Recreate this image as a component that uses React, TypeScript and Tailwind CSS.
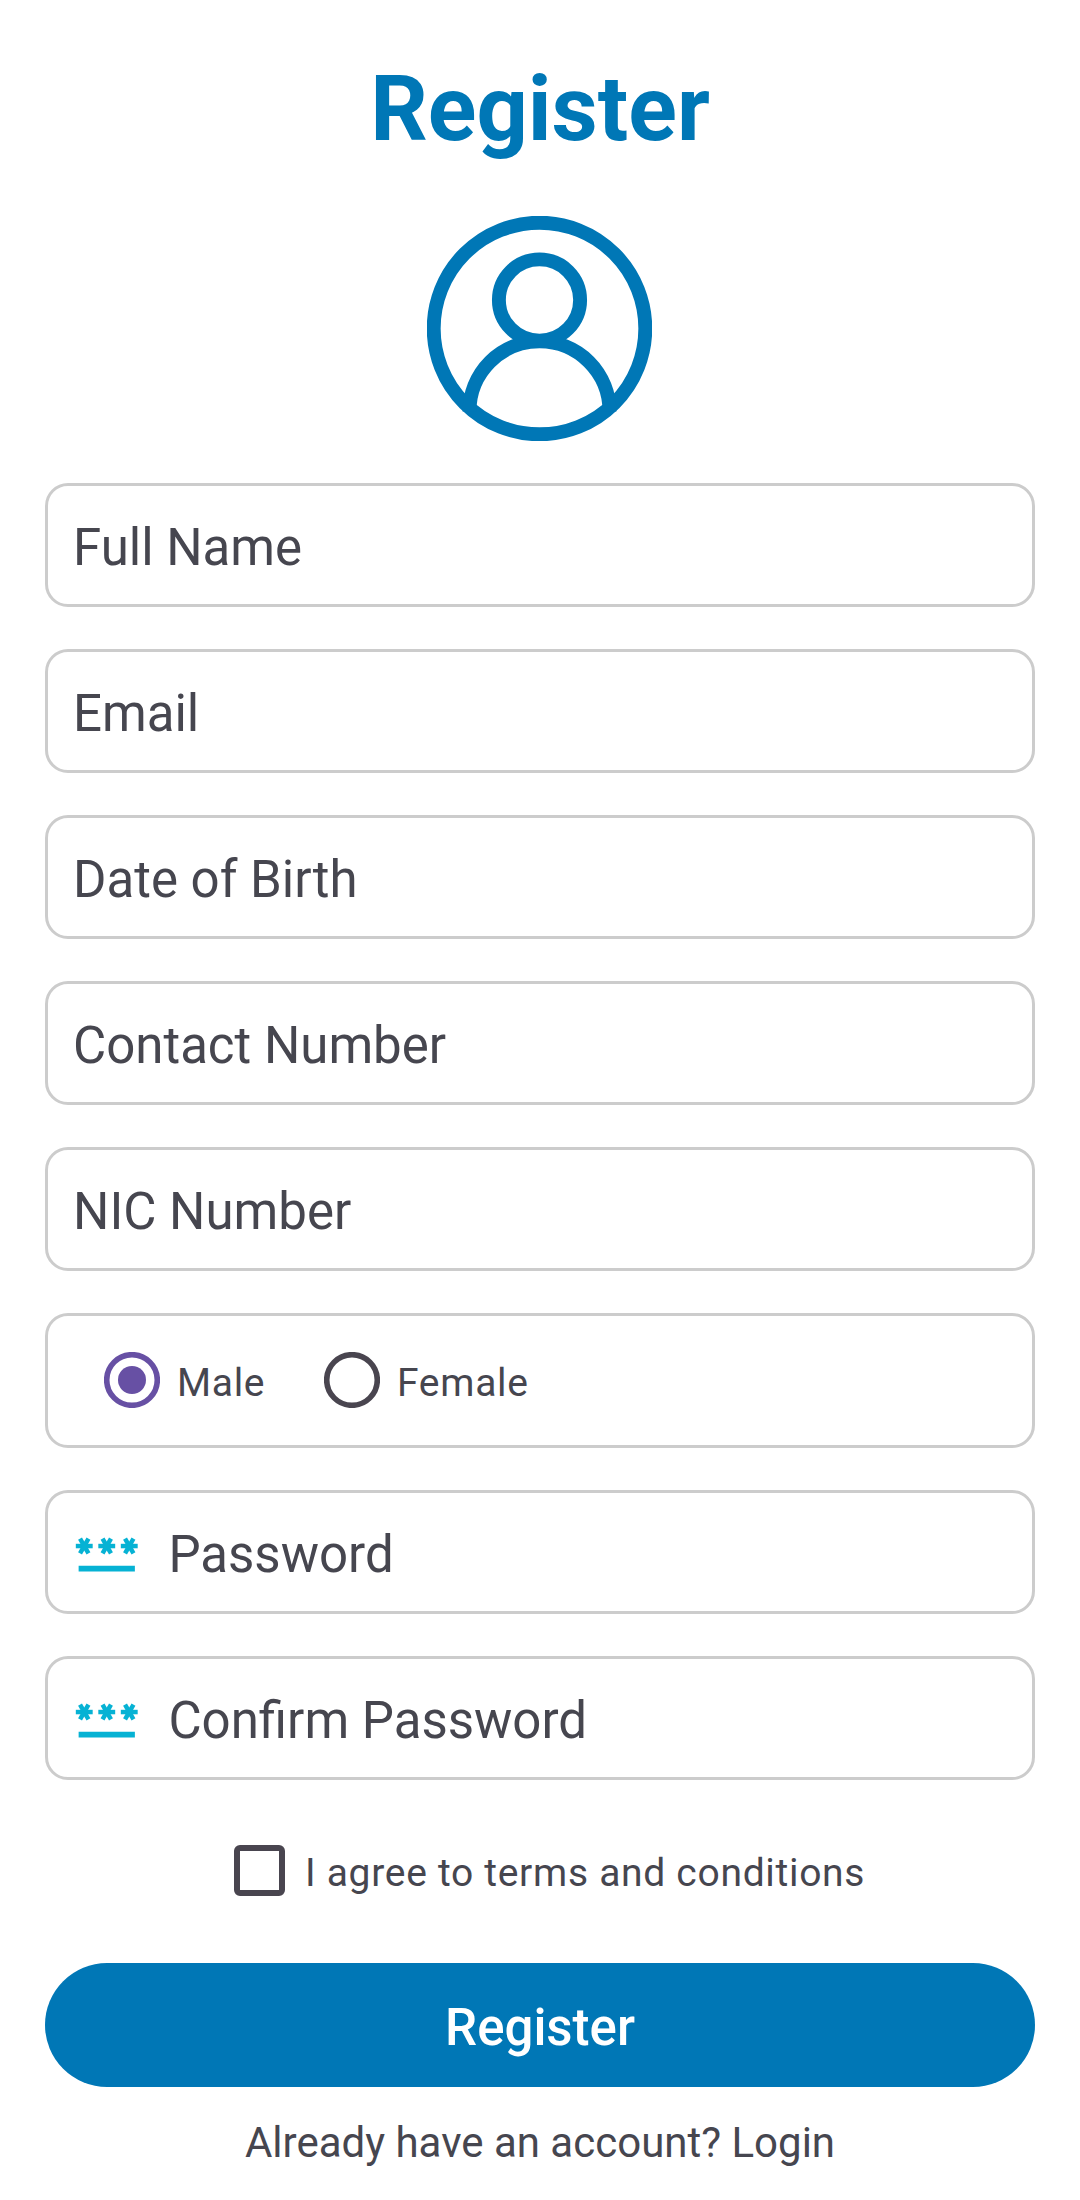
function PasswordIcon() {
  return (
    <svg
      viewBox="0 0 24 24"
      fill="none"
      stroke="currentColor"
      className="mr-[27.5px] ml-[0.4px] size-[67.5px] shrink-0 text-[#06b2d4]"
    >
      {[4, 12, 20].map((x) => (
        <g key={x} strokeWidth="1.6">
          {[0, 60, 120].map((angle) => (
            <path key={angle} d={`M${x - 3} 9.97h6`} transform={`rotate(${angle} ${x} 9.97)`} />
          ))}
        </g>
      ))}
      <path d="M2 18h20" strokeWidth="2" />
    </svg>
  );
}

function Field({ label, secret = false }: { label: string; secret?: boolean }) {
  return (
    <div className="mb-[42px] flex h-[124px] shrink-0 items-center rounded-[23px] border-[3px] border-[#cccccc] pl-[25px] text-[51px] leading-[60px]">
      {secret && <PasswordIcon />}
      <span className="pt-[5px]">{label}</span>
    </div>
  );
}

function Radio({ checked = false }: { checked?: boolean }) {
  return (
    <svg width="56" height="56" viewBox="0 0 56 56" className={checked ? 'text-[#6750a4]' : 'text-[#49454f]'}>
      <circle cx="28" cy="28" r="25.3" fill="none" stroke="currentColor" strokeWidth="5.6" />
      {checked && <circle cx="28" cy="28" r="14" fill="currentColor" />}
    </svg>
  );
}

export default function App() {
  return (
    <main className="flex h-[2200px] w-[1080px] flex-col bg-white px-[45px] font-['Roboto',sans-serif] text-[#46464f]">
      <h1 className="mt-[57px] h-[106px] text-center text-[90px] leading-[106px] font-bold text-[#0077b6]">Register</h1>
      <svg
        width="225"
        height="225"
        viewBox="0 0 225 225"
        className="mt-[53px] mr-px mb-[42px] shrink-0 self-center"
        fill="none"
        stroke="#0077b6"
        strokeWidth="13.9"
      >
        <circle cx="112.5" cy="112.5" r="105.8" />
        <circle cx="112.5" cy="84" r="40.6" />
        <path d="M42.5 195.4a70 70 0 0 1 140 0" />
      </svg>

      <Field label="Full Name" />
      <Field label="Email" />
      <Field label="Date of Birth" />
      <Field label="Contact Number" />
      <Field label="NIC Number" />

      <div className="mb-[42px] flex h-[135px] shrink-0 items-center rounded-[23px] border-[3px] border-[#cccccc] pb-px pl-[56px] text-[39px] leading-[48px] tracking-[0.7px]">
        <Radio checked />
        <span className="ml-[17px] w-[147px] pt-[5px]">Male</span>
        <Radio />
        <span className="ml-[17px] pt-[5px]">Female</span>
      </div>

      <Field label="Password" secret />
      <Field label="Confirm Password" secret />

      <div className="mt-[20px] flex h-[56px] shrink-0 items-center pl-[189px] text-[39px] leading-[48px] tracking-[0.7px]">
        <span className="size-[51px] rounded-[6px] border-[6px] border-[#49454f]" />
        <span className="ml-[20px] pt-[5px]">I agree to terms and conditions</span>
      </div>

      <button className="mt-[65px] h-[124px] shrink-0 rounded-full bg-[#0077b6] pt-[5px] text-[51px] leading-[60px] font-medium text-white">
        Register
      </button>
      <p className="mt-[31px] text-center text-[42px] leading-[50px]">Already have an account? Login</p>
    </main>
  );
}
